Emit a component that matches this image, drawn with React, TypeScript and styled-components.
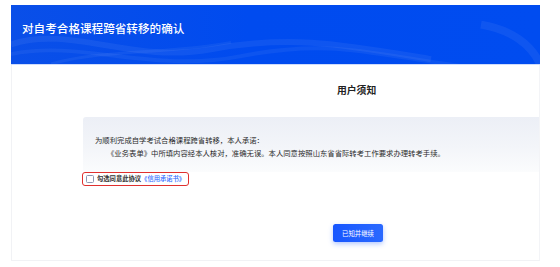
import React, { useState } from "react";
import styled, { createGlobalStyle } from "styled-components";

const GlobalStyle = createGlobalStyle`
  html, body {
    margin: 0;
    padding: 0;
    background: #ffffff;
    font-family: "Noto Sans CJK SC", "Noto Sans", sans-serif;
  }
`;

const Page = styled.div`
  width: 560px;
  height: 267px;
  padding: 5px 20px 0 11px;
  box-sizing: border-box;
  overflow: hidden;
`;

const Header = styled.div`
  position: relative;
  height: 60px;
  background: linear-gradient(90deg, #0a4fe8 0%, #004bef 45%, #004cf0 100%);
  border-bottom: 1px solid #cfdcfb;
  overflow: hidden;
  display: flex;
  align-items: flex-start;
  padding: 14px 0 0 11px;
  box-sizing: border-box;
`;

const Waves = styled.svg`
  position: absolute;
  left: 0;
  top: 0;
  width: 100%;
  height: 100%;
  pointer-events: none;
`;

const Title = styled.h1`
  position: relative;
  margin: 0;
  color: #ffffff;
  font-size: 11.6px;
  font-weight: 500;
  letter-spacing: 0;
  line-height: 18px;
`;

const Card = styled.div`
  height: 196px;
  background: #ffffff;
  border-left: 1px solid #f1f2f5;
  border-right: 1px solid #f3f4f7;
  border-bottom: 1px solid #f1f2f5;
  display: flex;
  flex-direction: column;
  box-sizing: border-box;
`;

const NoticeTitle = styled.h2`
  margin: 17px 0 0 0;
  padding-left: 325px;
  font-size: 9.8px;
  font-weight: 700;
  color: #222;
  line-height: 16px;
`;

const NoticeBox = styled.div`
  margin: 19px 0 0 71px;
  padding: 17px 0 14px 12px;
  background: linear-gradient(180deg, #eceff6 0%, #f3f5f9 55%, #fbfcfd 100%);
  border-radius: 3px 0 0 3px;
  display: flex;
  flex-direction: column;
  gap: 1px;
`;

const Line = styled.p<{ $indent?: boolean }>`
  margin: 0;
  padding-left: ${({ $indent }) => ($indent ? "12px" : "0")};
  font-size: 7.35px;
  line-height: 11.5px;
  color: #2a2a2a;
  white-space: nowrap;
`;

const AgreeRow = styled.label`
  margin: 0 0 0 70px;
  align-self: flex-start;
  display: flex;
  align-items: center;
  gap: 3px;
  height: 14px;
  padding: 0 3px 0 3px;
  border: 1.5px solid #e0302e;
  border-radius: 3px;
  box-sizing: border-box;
  cursor: pointer;
`;

const Box = styled.span<{ $checked: boolean }>`
  width: 6px;
  height: 6px;
  border: 1px solid #8d98b3;
  border-radius: 1.5px;
  background: ${({ $checked }) => ($checked ? "#1f5fff" : "#fff")};
`;

const AgreeText = styled.span`
  font-size: 6.3px;
  font-weight: 700;
  color: #333;
  white-space: nowrap;
  line-height: 10px;
`;

const Link = styled.span`
  color: #2f6bff;
  font-weight: 500;
`;

const Footer = styled.div`
  display: flex;
  padding: 38px 0 0 321px;
`;

const Button = styled.button`
  width: 50px;
  height: 18px;
  padding: 0;
  border: none;
  border-radius: 2.5px;
  background: linear-gradient(90deg, #1756ff 0%, #2a69ff 100%);
  box-shadow: 0 2px 5px rgba(35, 95, 255, 0.35);
  color: #fff;
  font-family: inherit;
  font-size: 6.4px;
  cursor: pointer;
`;

export default function App() {
  const [checked, setChecked] = useState(false);
  return (
    <>
      <GlobalStyle />
      <Page>
        <Header>
          <Waves viewBox="0 0 529 60" preserveAspectRatio="none">
            <path d="M0 40 C 60 20, 120 60, 200 45 S 330 40, 420 55" stroke="rgba(255,255,255,0.06)" strokeWidth="6" fill="none" />
            <path d="M0 50 C 70 35, 140 70, 230 52 S 360 50, 450 62" stroke="rgba(255,255,255,0.05)" strokeWidth="4" fill="none" />
            <path d="M40 60 C 90 45, 160 50, 220 38" stroke="rgba(255,255,255,0.05)" strokeWidth="3" fill="none" />
            <path d="M470 20 C 500 25, 520 40, 529 60" stroke="rgba(255,255,255,0.06)" strokeWidth="8" fill="none" />
          </Waves>
          <Title>对自考合格课程跨省转移的确认</Title>
        </Header>
        <Card>
          <NoticeTitle>用户须知</NoticeTitle>
          <NoticeBox>
            <Line>为顺利完成自学考试合格课程跨省转移，本人承诺：</Line>
            <Line $indent>
              《业务表单》中所填内容经本人核对，准确无误。本人同意按照山东省省际转考工作要求办理转考手续。
            </Line>
          </NoticeBox>
          <AgreeRow onClick={() => setChecked(!checked)}>
            <Box $checked={checked} />
            <AgreeText>
              勾选同意此协议<Link>《信用承诺书》</Link>
            </AgreeText>
          </AgreeRow>
          <Footer>
            <Button>已知并继续</Button>
          </Footer>
        </Card>
      </Page>
    </>
  );
}
